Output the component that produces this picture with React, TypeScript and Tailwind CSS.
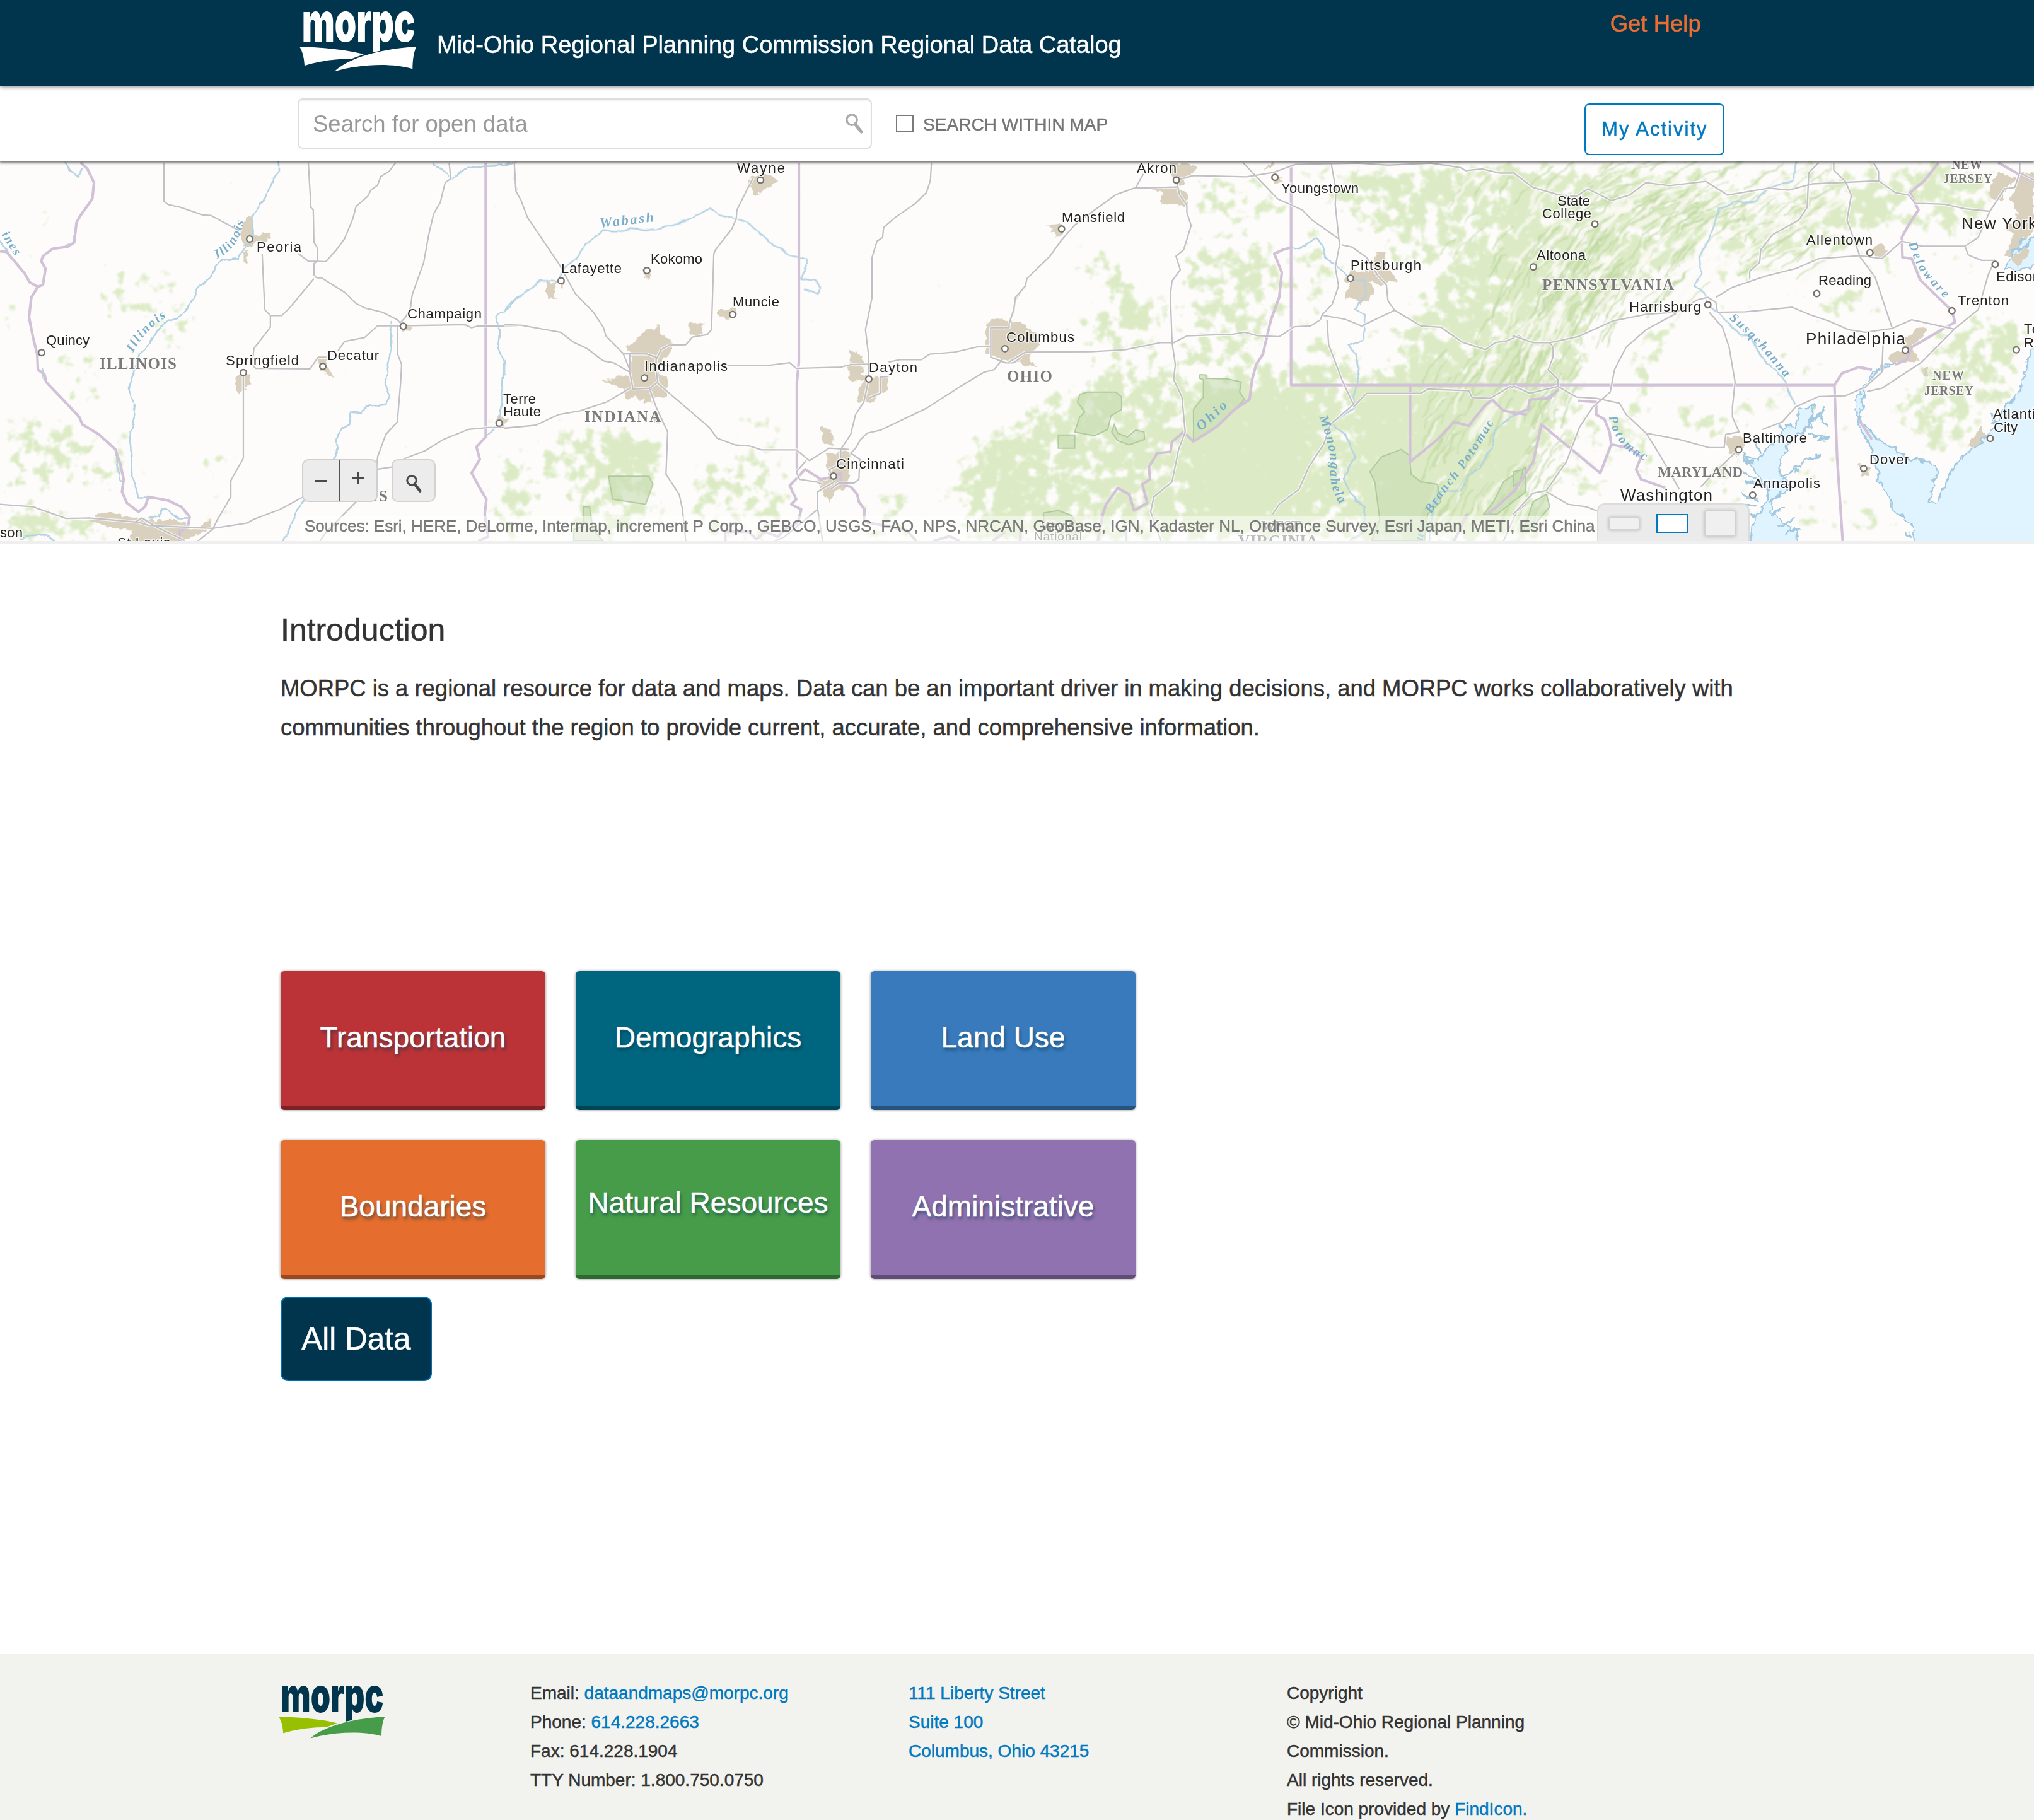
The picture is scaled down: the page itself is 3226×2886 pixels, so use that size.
import React from "react";

/* ------------------------------------------------------------------ */
/* Basemap data. Line work is stored in four survey sheets, each with   */
/* its own scale; labels are stored in page units.                      */
/* ------------------------------------------------------------------ */

type Sheet = {
  transform: string;
  kx: number;
  x0: number;
  roads: string[];
  rivers: string[];
  borders: string[];
  urban: string[];
  parks: string[];
  forest: [string, number][];
  cities: [number, number][];
};

const KY = 0.3954;

const sheets: Sheet[] = [
  {
    transform: "translate(0 250) scale(0.523 0.3954)",
    kx: 0.523,
    x0: 0,
    roads: [
      "M497 20V175L510 188L545 198L615 230L640 232L725 292",
      "M935 20L943 200L950 210L952 340L962 360V415L952 425V470L960 482",
      "M1200 20L1180 55L1155 75L1145 110L1125 130L1115 155L1080 195L1070 245L1045 325L1020 370L988 417L935 415L905 385",
      "M1362 20L1367 85L1350 100L1335 180L1315 225L1300 310L1285 420L1250 550L1245 600L1230 640L1215 660",
      "M960 482H975L1045 540L1080 585L1105 602L1160 620L1205 650L1223 676",
      "M952 485L880 600L855 633H820L803 610L795 385",
      "M820 633V680L770 765L765 830L775 845L940 847L965 800H990",
      "M1025 775L1045 737L1105 722L1145 674H1223L1410 670L1430 682L1450 675H1568",
      "M738 862V1205L700 1295V1360L660 1450L645 1490L600 1538",
      "M1205 676V785L1218 830L1215 900L1205 1060L1170 1110L1145 1200L1142 1250L1190 1240L1230 1205L1290 1175L1345 1130L1420 1090L1480 1082H1568",
      "M970 1538L990 1500L1080 1380",
      "M0 1390L100 1400L200 1447L270 1445L420 1462L450 1475L530 1480L645 1487L750 1465L770 1450L850 1410L920 1360",
      "M410 1462L430 1445L480 1485L560 1535",
      "M1568 130L1560 90V20",
    ],
    rivers: [
      "M845 20V55L825 95L800 170L765 240L768 320L740 365L722 405L670 412L655 430L640 480L600 520L590 560L565 605L540 645L510 655L480 690L455 745L420 790L410 850L388 930L402 980L410 1030L395 1100L400 1200L402 1285L420 1362H450",
      "M200 20L210 50L235 78L250 45",
      "M1315 20L1372 85L1400 55L1420 38L1530 32L1568 18",
      "M1187 655L1185 770L1168 905L1182 955L1170 990L1110 1000L1095 1022L1065 1018L1060 1070L1040 1085L1018 1135L1025 1165L1010 1215",
      "M920 1375L880 1470L860 1538",
      "M1568 555L1545 600L1505 635L1515 700L1510 760L1528 820L1522 960L1515 1065L1475 1120",
      "M60 1530L90 1515L140 1512L165 1538",
      "M0 335L25 375",
      "M450 1445L480 1440L490 1410L510 1412L540 1445H570",
      "M225 310L222 345L200 358",
      "M352 1180L362 1290L372 1300",
      "M128 845L132 890",
    ],
    borders: [
      "M1473 20V1120L1445 1160L1455 1210L1430 1265L1455 1325L1475 1370L1470 1430L1480 1520L1450 1538",
      "M245 20L265 45L285 100L280 165L245 230L232 260L225 340L205 357L160 365L130 395L125 415L138 445L130 510L115 518L95 560L88 640L100 720L113 790L115 850L135 870L140 900L205 990L240 1040L250 1070L300 1110L350 1170L365 1230L375 1290L370 1340L385 1385L420 1420L440 1400L450 1360L510 1375L550 1400L575 1440L570 1480L545 1500V1538",
      "M0 375L20 378L50 425L75 465L90 500L115 518",
    ],
    urban: [
      "M740 240L765 235L770 310L820 305V325L780 340L760 365L735 350Z",
      "M735 375H750V415L735 420Z",
      "M710 880L755 865L760 910L725 950L715 930Z",
      "M960 815L985 805L1000 850L1010 880L975 855Z",
      "M1212 662L1250 672L1245 700L1222 692Z",
      "M1500 1060L1515 1035L1540 1050L1530 1082H1500Z",
      "M270 1455L310 1420L390 1440L420 1450L540 1455L580 1490L640 1450V1480L600 1510L560 1538H380L400 1500L330 1480Z",
    ],
    parks: [],
    forest: [
      ["M300 440H560V650H300Z", 0.36],
      ["M460 640H600V760H460Z", 0.38],
      ["M60 360L130 380V480L90 470Z", 0.44],
      ["M90 190H210V290H90Z", 0.37],
      ["M0 540H70V800H0Z", 0.36],
      ["M140 740L330 780L300 1060L200 960Z", 0.38],
      ["M0 1000L240 1060L360 1250L330 1380L120 1200L0 1180Z", 0.42],
      ["M320 1080H390L400 1350L375 1290L350 1170Z", 0.5],
      ["M410 1270L470 1290L480 1350L420 1360Z", 0.52],
      ["M0 1370L200 1420L330 1470V1538H60L0 1500Z", 0.6],
      ["M600 1180H720V1290H600Z", 0.36],
      ["M620 480H680V540H620Z", 0.38],
      ["M1130 1120H1220V1230H1130Z", 0.34],
      ["M1470 980H1510V1130H1470Z", 0.38],
      ["M1500 1200H1568V1538H1480Z", 0.38],
      ["M590 1360H700V1440H590Z", 0.38],
      ["M0 1180H200V1350H0Z", 0.35],
    ],
    cities: [[757, 326], [126, 782], [738, 862], [979, 837], [1223, 676], [1514, 1065]],
  },
  {
    transform: "translate(800 250) scale(0.523 0.3954)",
    kx: 0.523,
    x0: 800,
    roads: [
      "M30 20L35 135L50 170L70 240L165 425L215 545L270 620L300 680L308 715L360 785L380 850",
      "M0 670L50 672L170 700L210 740L250 765L300 815L330 822L380 860",
      "M0 1085L95 1073L165 1030L230 1015L310 980L380 925",
      "M755 80L735 130L705 210L703 245L690 285L640 370L635 385L632 520L628 690L615 710L570 720L550 750L500 752L475 770L460 810",
      "M360 787H430L460 800V850L465 900L440 925L390 928L380 860V787",
      "M465 833H800L865 822L885 845L1020 840L1050 830L1105 828",
      "M1165 820L1200 810H1265L1290 788L1365 780L1440 757H1475",
      "M465 905L620 1080L645 1125L700 1152L745 1157L780 1172H885L925 1215L985 1165L1045 1170",
      "M440 925L460 1000L495 1100L490 1270L530 1350L540 1410L550 1538",
      "M1295 20L1292 90L1280 140L1245 185L1185 240L1150 280L1147 320L1130 335L1115 400V560L1095 690L1105 800V888L1090 980L1065 1030L1050 1110L1020 1170V1230L985 1250L1000 1300L950 1340V1410L965 1538",
      "M1105 965L1140 945V880L1165 878",
      "M1510 810L1485 850L1455 860L1380 920L1280 1005L1140 1093L1100 1105L1080 1130L1065 1165L1050 1185L1078 1210L1075 1290L1060 1305H1015L990 1328",
      "M915 1215L885 1260L895 1290L945 1300L965 1310",
      "M1568 535L1550 570L1545 620L1532 650L1530 682H1475V800L1520 823H1545L1568 800",
      "M950 1410L850 1520L820 1538",
    ],
    rivers: [
      "M0 610L35 560L75 530L110 492L160 497L185 440L220 400L250 345L300 293L360 295L385 285L430 292L490 278L560 245L625 203L650 228L700 243L740 260L815 352L835 358L855 385L915 405L918 425L900 485L940 492L962 520L950 548L910 528",
      "M0 815V870",
      "M0 30L15 20",
    ],
    borders: [
      "M893 20V820L887 900V1260",
      "M887 1285L912 1250L960 1290L998 1280L1020 1265V1310L1050 1320L1070 1350L1075 1380L1092 1410L1090 1460L1150 1475L1220 1495L1250 1538",
      "M887 1285L865 1315L885 1370L870 1390L900 1410L890 1465L850 1490L830 1520L790 1500L765 1530L740 1500H670V1538",
      "M1300 1538L1350 1518L1380 1538M1480 1538L1520 1500",
    ],
    urban: [
      "M735 90L790 60L830 95L795 120L760 155L750 120Z",
      "M128 503H155V563H128ZM165 500L190 505L175 530Z",
      "M418 445L445 440L440 485L425 480Z",
      "M650 612L705 605V640H650Z",
      "M563 665H603V712H563Z",
      "M385 790L370 760L430 700L470 670L480 710L510 745L500 790L465 820V870H495V960H440L450 990L425 985V965H365V930L300 890L380 870Z",
      "M450 1020H470V1065H450Z",
      "M1045 770L1085 795V870L1165 885L1160 930L1110 985L1070 975L1085 900L1045 895Z",
      "M960 1085H985L1000 1155H965Z",
      "M975 1180L1050 1185L1040 1310L1000 1350L985 1385L965 1330L950 1300L985 1280Z",
      "M1455 690L1475 640L1568 665V790L1530 820L1460 780Z",
    ],
    parks: [
      "M316 1278H438L450 1310L428 1390L328 1370Z",
      "M240 1400H258L268 1490L300 1538H210V1490L240 1480Z",
    ],
    forest: [
      ["M20 790L150 750V780L60 820L0 830Z", 0.42],
      ["M120 1080L260 1060L470 1120L485 1400L430 1538H180L200 1400L110 1250Z", 0.46],
      ["M290 1120H480V1260H300Z", 0.5],
      ["M720 1000L870 1020L860 1150H720Z", 0.4],
      ["M560 1200L880 1160L860 1300L900 1420L820 1538H600L540 1350Z", 0.41],
      ["M1100 1280L1260 1350L1240 1538H1090Z", 0.39],
      ["M1120 1050H1220V1110H1120Z", 0.35],
      ["M1440 1100L1568 1070V1538H1380L1400 1400L1370 1280Z", 0.58],
      ["M1260 480H1320V560H1260Z", 0.37],
      ["M1300 1280H1390V1400H1300Z", 0.38],
      ["M0 1180H110V1538H0Z", 0.37],
      ["M940 620H990V660H940Z", 0.38],
      ["M130 30H180V60H130ZM250 40H290V70H250Z", 0.38],
    ],
    cities: [[777, 90], [172, 494], [432, 453], [692, 629], [425, 883], [1105, 888], [998, 1277], [1518, 766]],
  },
  {
    transform: "translate(1600 250) scale(0.523 0.3954)",
    kx: 0.523,
    x0: 1600,
    roads: [
      "M408 65L385 120L325 148L255 215L200 270L160 330L125 395L55 485L50 515L20 560L15 610L0 670",
      "M385 122L510 118M510 90L560 72L720 77L800 60L870 27L1060 22L1150 30L1280 22L1370 40L1385 52L1435 45L1490 62H1535L1568 100",
      "M510 100L518 150L540 190V220L553 272L530 370L507 395L520 450L495 495L490 550L495 740L505 830L500 890L525 960L535 1100L515 1170L495 1300L440 1360L430 1420L462 1538",
      "M0 820L50 780L250 778L355 770L460 742H500L540 715L680 708L715 700L755 714L820 718L865 678L915 675L945 650L950 630L980 590L1000 515L990 440L1003 350L990 190L992 130L978 25",
      "M710 20L815 165L890 210L920 250L1000 325",
      "M1010 350L1040 358L1085 400L1120 475L1145 510L1150 575L1170 612L1250 675L1310 680L1375 740L1445 770L1475 742L1510 735L1545 715L1568 730",
      "M950 632L1020 648L1070 675L1170 612",
      "M965 650L970 750L1010 890L1045 990L975 1070L955 1150L910 1240L880 1330L820 1390L800 1430",
      "M1045 1000L1085 945L1250 945L1270 928L1395 935L1405 962L1460 965L1520 918L1568 935",
      "M1500 1538L1540 1420L1568 1390",
    ],
    rivers: [
      "M858 358L880 362L935 320L950 350L960 400L1000 440L1036 484L1080 495L1085 550L1050 605L1080 630L1075 730L1030 750L1055 800L1062 880L1045 960L1050 1000L980 1065L1020 1110L1050 1200L1015 1290L1055 1380L1080 1400L1078 1500L1035 1538",
      "M1568 1020L1530 1035L1475 1090L1470 1150L1430 1240L1400 1270L1370 1335L1310 1340L1290 1390L1275 1538",
      "M355 1480V1538",
    ],
    borders: [
      "M856 30V912H1568",
      "M1217 912V1220L1300 1130L1350 1060L1395 1075L1440 1000L1465 970L1500 1015L1568 1030",
      "M856 360L830 370L805 385L828 460L820 560L795 650L770 790L750 830L738 890L730 970L685 1010L630 1080L560 1138L530 1100L495 1140L490 1180L450 1185L425 1240L428 1290L405 1310L420 1385L380 1415L365 1350L330 1325L295 1390L285 1430L270 1538",
      "M1568 1270L1530 1340L1480 1400L1450 1430M1390 1430L1350 1538M35 1490V1538",
    ],
    urban: [
      "M0 660H30L70 690L100 745L60 790L80 840L40 830L0 810Z",
      "M485 25H550L570 45L530 100L510 110L540 150V190H465V145L430 130L500 115Z",
      "M115 270L155 265L165 310L145 320Z",
      "M785 25H800L795 40H770ZM815 60L832 95L805 105L800 70Z",
      "M1035 450L1090 460L1110 540L1070 590L1050 560L1015 565L1035 500L1015 490ZM1115 380L1145 375L1140 430L1180 490L1140 510L1085 490Z",
    ],
    parks: [
      "M238 940H325L342 960V1010L310 1035L300 1090L260 1115L200 1100L215 1040L230 1020L208 980L215 950Z",
      "M150 1112H200V1165H150Z",
      "M320 1070L330 1105L360 1120L385 1092L410 1100L412 1130L365 1152L330 1135L312 1100Z",
      "M580 870L598 872V885L665 888L705 900L700 940L715 970L685 1010L630 1080L560 1138V1010L590 960V890L578 885Z",
      "M1190 1170L1215 1195L1220 1270L1250 1300L1300 1310L1310 1380L1270 1430L1260 1538H1100L1125 1450L1110 1300L1095 1260L1130 1200Z",
      "M1568 1240L1500 1300L1470 1380L1440 1430H1480L1568 1340Z",
      "M105 1425L150 1415L190 1435L210 1480L190 1538H110Z",
    ],
    forest: [
      ["M100 940L300 900L560 930L760 830L1100 880L1330 890L1568 880V1538H0V1130Z", 0.57],
      ["M560 950H900V1480H560Z", 0.6],
      ["M1080 900H1568V1538H1080Z", 0.5],
      ["M520 300L840 360L830 640L770 850L560 860L520 700Z", 0.46],
      ["M170 600L480 560V760L230 780Z", 0.46],
      ["M170 350L330 370L370 500L440 560L430 680L340 640L270 500L180 400Z", 0.48],
      ["M270 800H560V930H250Z", 0.46],
      ["M700 370H800V500H700Z", 0.3],
      ["M540 60L840 90V280H560Z", 0.4],
      ["M870 30H1568V340L1380 380L1080 330L1000 200L870 110Z", 0.49],
      ["M1080 40H1568V180H1300L1080 150Z", 0.25],
      ["M870 240L1000 330V600L870 640Z", 0.42],
      ["M870 680L980 700L1120 880H870Z", 0.43],
      ["M1320 400L1568 330V900H1120L1180 720L1260 560Z", 0.58],
      ["M1060 640H1150V720H1060Z", 0.43],
      ["M1100 540L1250 560V640L1150 600Z", 0.38],
      ["M1150 340L1320 380L1260 480L1160 450Z", 0.42],
    ],
    cities: [[508, 90], [807, 79], [160, 286], [1036, 484]],
  },
  {
    transform: "translate(2400 250) scale(0.5268 0.3954)",
    kx: 0.5268,
    x0: 2400,
    roads: [
      "M0 60L60 120L140 150L190 155L225 125L295 172L350 150L400 100L470 112L580 95L645 150L770 122L830 130L900 105L1100 93L1150 140L1190 150L1210 183L1300 187L1360 205L1435 215L1480 125L1510 120L1525 60V20",
      "M920 20L890 60L885 200L860 250L780 310L745 370L742 420L712 455V485",
      "M965 20V50L1000 95L1018 150L1005 250L1045 400L1090 480L1140 680",
      "M1085 20L1100 55V93",
      "M610 560L660 520L760 475L850 445L920 405L1045 393L1110 405L1170 335L1230 355H1360L1400 320L1435 215",
      "M1360 355L1370 390L1410 412H1450L1430 470L1400 610L1330 685L1230 820L1110 925L1065 938",
      "M0 715L60 742H110L195 718L300 655L400 628L490 620L555 570L586 560L610 580L615 620L700 618L840 600L890 628L950 655L1010 690L1060 700L1140 685L1200 650L1330 688",
      "M110 742L120 760V800L105 850L135 890V918L190 960L250 965L320 985L340 1030L400 1105L500 1130L590 1163H635L640 1110L680 1100L660 1040V1000L668 900L650 760L630 680L590 620",
      "M490 625L400 690L340 760L305 850L292 940L240 1000L200 1080L160 1220L100 1335L60 1345L0 1430",
      "M100 1340L165 1390L220 1400L260 1420",
      "M400 1105L445 1200L500 1330M675 1175L600 1270L565 1320",
      "M750 1090L810 1060L850 1000L920 958L1000 955L1060 920L1110 860L1115 700",
      "M0 915L50 945L135 918",
      "M1525 60L1568 90",
    ],
    rivers: [
      "M850 20L845 90L770 122L730 175L700 180L675 170L620 205L600 290L560 400L567 465L545 515L580 545L586 590L640 650L680 710L715 715L740 790L810 880L850 990",
      "M100 965L135 930M0 1030L45 1010",
    ],
    borders: [
      "M0 912H967L975 1200L992 1538",
      "M967 912L990 865L1040 840L1080 850",
      "M1280 20L1240 90L1195 140L1220 210L1190 270L1170 320L1172 400L1200 405L1225 490L1321 614L1330 660L1290 690L1200 760L1185 810L1150 830",
      "M1460 20L1520 65L1568 95",
      "M0 1030L45 1010L50 970L110 965L135 930",
      "M195 975L250 980V1030L275 1050L290 1100L295 1150L350 1165L385 1200L370 1250L385 1290L460 1325",
      "M295 1150L262 1265L85 1070L60 1220L0 1345",
      "M1040 1050L1080 1130",
    ],
    urban: [
      "M1060 375L1110 345L1125 380L1080 395Z",
      "M1180 720L1230 670L1250 690L1200 760L1220 820L1185 815L1140 825L1130 800L1165 775ZM1225 840L1250 845L1245 880L1230 870Z",
      "M645 1120H690L695 1165L670 1200L650 1180Z",
      "M1370 1160L1410 1080L1430 1115L1400 1155Z",
      "M1040 1230L1075 1245L1070 1280L1045 1275Z",
      "M1465 60L1510 80L1470 165L1435 160V120ZM1530 60H1568V290L1530 330L1500 400L1480 390L1510 310L1480 290L1520 230L1495 170Z",
    ],
    parks: ["M0 1260L30 1250L20 1300L0 1320Z", "M60 1380L100 1350L110 1400L60 1480L30 1500Z"],
    forest: [
      ["M0 20H600L560 120L640 160L560 420L300 600L200 700H0Z", 0.58],
      ["M600 20H1300L1200 140L1170 280L1050 250L1000 120L620 90Z", 0.48],
      ["M1200 30H1440L1470 180L1400 210L1220 180Z", 0.58],
      ["M620 160L1000 130L1160 180L1040 380L820 420L600 540L620 350Z", 0.5],
      ["M1180 200H1440L1400 320L1360 340L1200 330Z", 0.48],
      ["M0 700H240L220 850L120 1100L0 1340Z", 0.6],
      ["M0 1340L110 1380V1538H0Z", 0.56],
      ["M390 680L540 640L430 800L410 1060L350 1080V860Z", 0.54],
      ["M820 540L1050 500L1140 620L960 660Z", 0.46],
      ["M620 570L830 570L830 600L640 610Z", 0.44],
      ["M430 950L660 1000V1160L480 1120Z", 0.42],
      ["M660 950L840 930L830 1060L680 1090Z", 0.42],
      ["M700 800L900 760L960 900L820 890Z", 0.4],
      ["M560 1180L700 1200V1400H600Z", 0.44],
      ["M100 1060L220 1100L300 1340L250 1400L120 1300Z", 0.44],
      ["M130 930L330 1030L460 1200L420 1280L300 1200Z", 0.43],
      ["M1250 700L1440 620L1530 760L1500 950L1400 1080L1230 1130L1130 1060L1160 920L1240 880Z", 0.5],
      ["M1430 620L1560 620V720L1500 800Z", 0.5],
      ["M1210 1100L1400 1090L1330 1200L1260 1220Z", 0.44],
      ["M1040 400L1180 380L1230 520L1100 500Z", 0.4],
      ["M1260 380L1380 400L1360 520L1300 480Z", 0.42],
      ["M990 940L1040 1080L1020 1200H990Z", 0.39],
      ["M1000 1320L1100 1380L1170 1538H1000Z", 0.38],
      ["M900 960L960 1000V1250L900 1100Z", 0.4],
      ["M860 1200H950V1538H860Z", 0.37],
    ],
    cities: [
      [246, 266], [61, 438], [586, 590], [1074, 381], [914, 545], [1451, 428], [1321, 614],
      [1181, 772], [1515, 771], [1436, 1126], [679, 1171], [721, 1353], [1055, 1247],
    ],
  },
];

const water: string[] = [
  "M1580 740L1558 770L1545 850L1520 950L1480 1000L1460 1050L1430 1110L1400 1150L1350 1200L1310 1280L1290 1340L1280 1380L1250 1382L1270 1300L1275 1240L1240 1215H1200L1150 1170L1100 1130L1060 1080L1040 1050L1055 1000L1050 960L1070 910L1100 850L1150 830L1120 828L1080 870L1060 910L1030 970L1040 1070L1080 1170L1095 1230L1100 1300L1130 1360L1150 1420L1200 1470L1212 1560H1600V740Z",
  "M1590 310L1530 330L1510 380L1480 445L1530 450L1590 430Z",
  "M862 1010L885 1015L905 990L900 1050L880 1090L840 1130L815 1180L800 1260L830 1300L820 1350L780 1370L775 1420L850 1500L862 1560H712L720 1470L760 1380L770 1340L745 1290L725 1240L695 1200L740 1215L765 1160L800 1130L810 1080L850 1080Z",
];

const inlets: string[] = [
  "M890 1060L905 1040L895 1080M905 1050L945 1000M910 1040L930 1020V1050L948 1075M890 1110L950 1122L915 1135",
  "M805 1280L870 1230L880 1205L925 1195M840 1250L865 1260M700 1180L690 1215L725 1220M745 1190L730 1140M810 1090L795 1070",
  "M690 1260L730 1290M700 1300L740 1310M685 1350L740 1370M690 1390L735 1400M700 1420L730 1440M800 1300L830 1280M780 1440L810 1400M800 1480L850 1440M820 1510L860 1480M770 1380L800 1360L810 1340",
  "M1225 1210L1235 1225M1440 1020L1450 1060M1180 1500L1200 1520M1500 380L1550 350L1555 320",
];

type Label = [string, number, number, number, number?];

const cityLabels: Label[] = [
  ["Peoria", 407, 478, 399], ["Quincy", 73, 142, 547], ["Springfield", 358, 474, 579],
  ["Decatur", 519, 601, 571], ["Champaign", 646, 764, 505], ["son", 0, 36, 852],
  ["St Louis", 186, 270, 868], ["Terre", 798, 850, 640], ["Haute", 798, 858, 660],
  ["Wayne", 1169, 1245, 274], ["Lafayette", 890, 986, 433], ["Kokomo", 1032, 1114, 418],
  ["Muncie", 1162, 1236, 486], ["Indianapolis", 1022, 1154, 588], ["Dayton", 1378, 1455, 590],
  ["Cincinnati", 1326, 1434, 743], ["Akron", 1803, 1866, 274], ["Youngstown", 2032, 2155, 306],
  ["Mansfield", 1684, 1784, 352], ["Columbus", 1596, 1704, 542], ["Pittsburgh", 2142, 2254, 428],
  ["State", 2470, 2522, 326], ["College", 2446, 2524, 346], ["Altoona", 2437, 2515, 412],
  ["Harrisburg", 2584, 2698, 494], ["Allentown", 2865, 2970, 388], ["Reading", 2884, 2968, 452],
  ["New York", 3111, 3230, 363, 26], ["Edison", 3166, 3236, 446], ["Trenton", 3105, 3186, 484],
  ["Philadelphia", 2864, 3022, 546, 26], ["To", 3210, 3235, 529], ["Ri", 3210, 3231, 551],
  ["Atlantic", 3161, 3240, 664], ["City", 3162, 3200, 685], ["Baltimore", 2764, 2866, 702],
  ["Annapolis", 2781, 2887, 774], ["Dover", 2965, 3028, 736], ["Washington", 2570, 2716, 794, 26],
];

const stateLabels: Label[] = [
  ["ILLINOIS", 158, 280, 585], ["INDIANA", 927, 1048, 669], ["OHIO", 1597, 1669, 605],
  ["PENNSYLVANIA", 2446, 2655, 460], ["MARYLAND", 2629, 2764, 756, 23], ["NEW", 3095, 3144, 268, 20],
  ["JERSEY", 3082, 3160, 290, 20], ["NEW", 3065, 3115, 602, 20], ["JERSEY", 3052, 3130, 626, 20],
  ["VIRGINIA", 1964, 2090, 866], ["WEST", 2000, 2063, 841, 23], ["IS", 590, 615, 795],
];

const parkLabels: Label[] = [
  ["Wayne", 1652, 1704, 841, 20], ["National", 1640, 1716, 857, 19],
];

const riverLabels: [string, string, number, number][] = [
  ["Illinois", "M344 410Q378 396 388 346", 76, 20],
  ["Illinois", "M211 559Q228 524 268 500", 78, 20],
  ["ines", "M2 372L26 410", 40, 20],
  ["Wabash", "M952 361L1038 351", 86, 22],
  ["Ohio", "M1905 684L1950 642", 58, 22],
  ["Monongahela", "M2092 661Q2112 712 2110 744T2128 804", 144, 21],
  ["Branch Potomac", "M2270 815Q2288 784 2306 764T2371 668", 176, 20],
  ["u", "M2256 858L2262 830", 10, 20],
  ["Delaware", "M3027 386Q3040 424 3050 436T3087 476", 106, 20],
  ["Susqehanna", "M2742 505Q2768 528 2782 542T2832 600", 130, 20],
  ["Potomac", "M2552 661Q2556 684 2570 702T2612 732", 94, 20],
];

/* Small seeded generator so the ridge hatching is stable between renders. */
function createRandom(seed: number) {
  let s = seed;
  return () => {
    s = (s * 1664525 + 1013904223) % 4294967296;
    return s / 4294967296;
  };
}

type Ridge = { d: string; light: boolean; w: number };

function buildRidges(): Ridge[] {
  const rand = createRandom(11);
  const zones = [
    { x: 2280, y: 300, w: 170, h: 150, angle: -48, n: 14, light: 0.3 },
    { x: 2360, y: 420, w: 190, h: 140, angle: -60, n: 55, light: 0.35 },
    { x: 2420, y: 330, w: 250, h: 180, angle: -50, n: 100, light: 0.45 },
    { x: 2500, y: 262, w: 240, h: 110, angle: -28, n: 60, light: 0.45 },
    { x: 2690, y: 300, w: 180, h: 150, angle: -32, n: 70, light: 0.6 },
    { x: 2250, y: 610, w: 200, h: 240, angle: -60, n: 90, light: 0.25 },
    { x: 2330, y: 480, w: 130, h: 130, angle: -62, n: 30, light: 0.3 },
    { x: 2400, y: 520, w: 90, h: 160, angle: -66, n: 36, light: 0.35 },
  ];
  const ridges: Ridge[] = [];
  zones.forEach((z) => {
    for (let i = 0; i < z.n; i++) {
      const a = ((z.angle + (rand() - 0.5) * 14) * Math.PI) / 180;
      const len = 26 + rand() * 62;
      const x = z.x + rand() * z.w;
      const y = z.y + rand() * z.h;
      const dx = Math.cos(a) * len;
      const dy = Math.sin(a) * len;
      const light = rand() < z.light;
      const cx = x + dx / 2 - 5;
      const cy = y + dy / 2 - 6;
      ridges.push({
        d: `M${x.toFixed(1)} ${y.toFixed(1)}Q${cx.toFixed(1)} ${cy.toFixed(1)} ${(x + dx).toFixed(1)} ${(y + dy).toFixed(1)}`,
        light,
        w: light ? 3 + rand() * 5 : 1.5 + rand() * 1.5,
      });
    }
  });
  return ridges;
}

const ridges = buildRidges();

function MapLabel({ item, serif, fill }: { item: Label; serif?: boolean; fill: string }) {
  const [text, x0, x1, y, size] = item;
  return (
    <text
      x={x0}
      y={y}
      textLength={x1 - x0}
      fontSize={size ?? (serif ? 25 : 22)}
      fontWeight={serif ? 700 : 400}
      fill={fill}
      stroke="#fdfcfb"
      strokeOpacity={0.75}
      strokeWidth={3.5}
      paintOrder="stroke"
      className={serif ? "font-['Liberation_Serif',serif]" : "font-['Liberation_Sans',Arial,sans-serif]"}
    >
      {text}
    </text>
  );
}

function Basemap() {
  return (
    <svg className="block h-[602px] w-[3226px]" viewBox="0 256 3226 602" preserveAspectRatio="none">
      <defs>
        <filter id="foliage" filterUnits="userSpaceOnUse" x="-20" y="230" width="3270" height="650" colorInterpolationFilters="sRGB">
          <feGaussianBlur in="SourceGraphic" stdDeviation="16" result="density" />
          <feTurbulence type="fractalNoise" baseFrequency="0.05" numOctaves="5" seed="7" result="noise" />
          <feColorMatrix in="noise" type="matrix" values="0 0 0 0 0  0 0 0 0 0  0 0 0 0 0  0 0 0 1 0" result="grain" />
          <feComposite in="density" in2="grain" operator="arithmetic" k1="0" k2="0.5" k3="0.5" k4="0" result="mix" />
          <feComponentTransfer in="mix" result="mask">
            <feFuncA type="linear" slope="12" intercept="-5.3" />
          </feComponentTransfer>
          <feFlood floodColor="#dcebc5" />
          <feComposite in2="mask" operator="in" result="leaf" />
          <feGaussianBlur in="leaf" stdDeviation="0.9" />
        </filter>
        <filter id="ragged" filterUnits="userSpaceOnUse" x="-20" y="230" width="3270" height="650">
          <feTurbulence type="fractalNoise" baseFrequency="0.09" numOctaves="2" seed="3" result="n" />
          <feDisplacementMap in="SourceGraphic" in2="n" scale="13" xChannelSelector="R" yChannelSelector="G" />
        </filter>
        <filter id="wavy" filterUnits="userSpaceOnUse" x="-20" y="230" width="3270" height="650">
          <feTurbulence type="fractalNoise" baseFrequency="0.06" numOctaves="2" seed="5" result="n" />
          <feDisplacementMap in="SourceGraphic" in2="n" scale="6" xChannelSelector="R" yChannelSelector="G" />
        </filter>
        <filter id="ridge" filterUnits="userSpaceOnUse" x="-20" y="230" width="3270" height="650">
          <feTurbulence type="fractalNoise" baseFrequency="0.05" numOctaves="2" seed="9" result="n" />
          <feDisplacementMap in="SourceGraphic" in2="n" scale="10" xChannelSelector="R" yChannelSelector="G" result="r" />
          <feGaussianBlur in="r" stdDeviation="1.1" />
        </filter>
      </defs>

      <rect x="0" y="256" width="3226" height="602" fill="#fdfcfb" />

      <g filter="url(#foliage)">
        {sheets.map((s) => (
          <g key={s.x0} transform={s.transform}>
            {s.forest.map(([d, o]) => (
              <path key={d} d={d} fill="#000" fillOpacity={o} />
            ))}
          </g>
        ))}
      </g>

      <g filter="url(#ridge)" fill="none" strokeLinecap="round">
        {ridges.map((r) => (
          <path
            key={r.d}
            d={r.d}
            stroke={r.light ? "#fbfaf4" : "#bfd7a0"}
            strokeOpacity={r.light ? 0.7 : 0.75}
            strokeWidth={r.w}
          />
        ))}
      </g>

      {sheets.map((s) => (
        <g key={s.x0} transform={s.transform}>
          {s.parks.map((d) => (
            <path key={d} d={d} fill="#c6dcb0" fillOpacity={0.6} stroke="#b0caa0" strokeWidth={2} vectorEffect="non-scaling-stroke" />
          ))}
        </g>
      ))}

      <g filter="url(#ragged)">
        {sheets.map((s) => (
          <g key={s.x0} transform={s.transform}>
            {s.urban.map((d) => (
              <path key={d} d={d} fill="#d9d1be" />
            ))}
          </g>
        ))}
        <g transform={sheets[3].transform} strokeLinejoin="round">
          {water.map((d) => (
            <path key={d} d={d} fill="#dff4fe" stroke="#a3c9e2" strokeWidth={2.5} vectorEffect="non-scaling-stroke" />
          ))}
          {inlets.map((d) => (
            <path key={d} d={d} fill="none" stroke="#a3c9e2" strokeWidth={3.5} vectorEffect="non-scaling-stroke" />
          ))}
          <path d="M1500 400L1540 360L1560 370L1520 440Z" fill="#d9d1be" />
        </g>
      </g>

      <g filter="url(#wavy)" fill="none" strokeLinejoin="round" strokeLinecap="round">
        {sheets.map((s) => (
          <g key={s.x0} transform={s.transform}>
            {s.rivers.map((d) => (
              <path key={d} d={d} stroke="#b4d3e4" strokeWidth={2.6} vectorEffect="non-scaling-stroke" />
            ))}
          </g>
        ))}
      </g>

      <g fill="none" strokeLinejoin="round">
        {sheets.map((s) => (
          <g key={s.x0} transform={s.transform}>
            {s.borders.map((d) => (
              <path key={d} d={d} stroke="#d2c2d7" strokeWidth={4.2} vectorEffect="non-scaling-stroke" />
            ))}
            {s.roads.map((d) => (
              <path key={`halo${d}`} d={d} stroke="#ffffff" strokeOpacity={0.7} strokeWidth={5} vectorEffect="non-scaling-stroke" />
            ))}
            {s.roads.map((d) => (
              <path key={d} d={d} stroke="#c2c0c4" strokeWidth={2.3} vectorEffect="non-scaling-stroke" />
            ))}
          </g>
        ))}
      </g>

      {riverLabels.map(([text, d, len, size], i) => (
        <g key={d}>
          <path id={`river-${i}`} d={d} fill="none" />
          <text fontSize={size} fontWeight={700} fill="#79aecb" className="font-['Liberation_Serif',serif] italic">
            <textPath href={`#river-${i}`} textLength={len}>
              {text}
            </textPath>
          </text>
        </g>
      ))}

      {stateLabels.map((l) => (
        <MapLabel key={l[0] + l[1]} item={l} serif fill="#7a7a7a" />
      ))}
      {parkLabels.map((l) => (
        <MapLabel key={l[0] + l[1]} item={l} fill="#6a7062" />
      ))}

      {sheets.map((s) =>
        s.cities.map(([x, y]) => (
          <circle
            key={`${s.x0}-${x}`}
            cx={s.x0 + x * s.kx}
            cy={250 + y * KY}
            r={4.8}
            fill="#fff"
            stroke="#77736c"
            strokeWidth={2.4}
          />
        )),
      )}

      {cityLabels.map((l) => (
        <MapLabel key={l[0] + l[1]} item={l} fill="#222222" />
      ))}
    </svg>
  );
}

function Logo({ className, ink, left, right, ground }: { className: string; ink: string; left: string; right: string; ground: string }) {
  return (
    <svg className={className} viewBox="100 45 565 300" preserveAspectRatio="none">
      <text
        x="114"
        y="199"
        fontSize="258"
        fontWeight="900"
        textLength="540"
        lengthAdjust="spacingAndGlyphs"
        fill={ink}
        className="font-['Inter','Liberation_Sans',sans-serif]"
      >
        morpc
      </text>
      <path d="M440 345V252C480 244 560 222 680 214V345Z" fill={ground} />
      <path d="M103 222C200 225 320 235 410 258L352 280C270 280 190 292 127 313C125 275 118 245 103 222Z" fill={left} />
      <path d="M660 222C645 255 642 295 642 328C540 298 390 305 270 340C320 290 450 235 660 222Z" fill={right} />
    </svg>
  );
}

function Magnifier({ className, strokeWidth }: { className: string; strokeWidth: number }) {
  return (
    <svg className={className} viewBox="0 0 30 34" fill="none" stroke="currentColor" strokeLinecap="round">
      <circle cx="11" cy="11" r="8.2" strokeWidth={strokeWidth} />
      <path d="M16.5 18L26 30" strokeWidth={strokeWidth + 1.8} />
    </svg>
  );
}

const sources =
  "Sources: Esri, HERE, DeLorme, Intermap, increment P Corp., GEBCO, USGS, FAO, NPS, NRCAN, GeoBase, IGN, Kadaster NL, Ordnance Survey, Esri Japan, METI, Esri China";

const tiles = [
  { label: "Transportation", color: "bg-[#bb3336] border-[#7d2224]", text: "pt-[79px]" },
  { label: "Demographics", color: "bg-[#00667f] border-[#004555]", text: "pt-[79px]" },
  { label: "Land Use", color: "bg-[#397abc] border-[#26527e]", text: "pt-[79px]" },
  { label: "Boundaries", color: "bg-[#e56d2d] border-[#9a491e]", text: "pt-[79px]" },
  { label: "Natural Resources", color: "bg-[#479c4a] border-[#2f6831]", text: "pt-[73px]" },
  { label: "Administrative", color: "bg-[#9172b0] border-[#614c76]", text: "pt-[79px]" },
];

export default function App() {
  return (
    <div className="flex h-[2886px] w-[3226px] flex-col overflow-hidden bg-white font-['Liberation_Sans',Arial,sans-serif] text-[#333] [-webkit-text-stroke:0.5px_currentColor]">
      <header className="relative z-20 flex h-[136px] shrink-0 items-start bg-[#00354d] pl-[474px] shadow-[0_1px_7px_rgba(0,0,0,0.6)]">
        <Logo className="mt-[15px] h-[100px] w-[188px] [-webkit-text-stroke:0]" ink="#fff" left="#fff" right="#fff" ground="#00354d" />
        <h1 className="mt-[47px] ml-[31px] text-[38px] leading-[48px] whitespace-nowrap text-white">
          Mid-Ohio Regional Planning Commission Regional Data Catalog
        </h1>
        <a className="mt-[14px] ml-[775px] text-[36.5px] leading-[48px] whitespace-nowrap text-[#ea6d33]">Get Help</a>
      </header>

      <div className="relative z-10 flex h-[120px] shrink-0 items-start bg-white pt-[20px] pl-[472px] shadow-[0_1px_4px_1px_rgba(0,0,0,0.6)]">
        <div className="flex h-[80px] w-[911px] items-center justify-between rounded-[8px] border-2 border-[#dedede] pr-[11px] pl-[22px] shadow-[inset_0_2px_2px_rgba(0,0,0,0.05)]">
          <span className="pt-[3px] text-[36.5px] text-[#999] [-webkit-text-stroke:0]">Search for open data</span>
          <Magnifier className="h-[34px] w-[30px] text-[#aaa]" strokeWidth={3.4} />
        </div>
        <div className="ml-[38px] flex h-[80px] items-center">
          <span className="h-[28px] w-[28px] border-2 border-[#7a7a7a]" />
          <span className="ml-[15px] pt-[3px] text-[28px] tracking-[0.05px] text-[#757575]">SEARCH WITHIN MAP</span>
        </div>
        <a className="mt-[8px] ml-[756px] flex h-[82px] w-[222px] items-center justify-center rounded-[8px] border-2 border-[#0079c1] text-[31px] tracking-[2px] text-[#0079c1]">
          My Activity
        </a>
      </div>

      <div className="relative h-[606px] shrink-0 overflow-hidden border-b-4 border-[#efefef] [-webkit-text-stroke:0]">
        <Basemap />
        <div className="absolute top-[562px] left-[476px] h-[40px] w-[2294px] bg-white/50 pl-[7px] text-[26px] leading-[30px] whitespace-nowrap text-[#666]/85">
          <span className="relative top-[1px] [-webkit-text-stroke:0.4px_currentColor]">{sources}</span>
        </div>
        <div className="absolute top-[472px] left-[479px] flex gap-[22px] text-[#4a4a4a]">
          <div className="flex h-[68px] w-[120px] overflow-hidden rounded-[10px] border-2 border-[#cfcfcf] bg-[#ececec]">
            <span className="flex h-full w-[58px] items-center justify-center border-r-2 border-[#555]">
              <span className="h-[3px] w-[19px] bg-[#4a4a4a]" />
            </span>
            <span className="relative flex h-full flex-1 items-center justify-center">
              <span className="absolute top-[27px] h-[3px] w-[18px] bg-[#4a4a4a]" />
              <span className="absolute top-[19px] h-[18px] w-[3px] bg-[#4a4a4a]" />
            </span>
          </div>
          <div className="flex h-[68px] w-[70px] items-center justify-center rounded-[10px] border-2 border-[#d2d2d2] bg-[#ececec] pt-[9px]">
            <Magnifier className="h-[30px] w-[27px]" strokeWidth={3.4} />
          </div>
        </div>
        <div className="absolute top-[542px] left-[2533px] flex h-[60px] w-[242px] items-center gap-[27px] rounded-t-[12px] border-2 border-b-0 border-[#dcdcdc] bg-[#ebebeb] pt-[2px] pl-[17px]">
          <span className="h-[19px] w-[48px] rounded-[3px] border border-[#d2d2d2] bg-[#f0f0f0] shadow-[0_0_4px_2px_rgba(0,0,0,0.15)]" />
          <span className="h-[30px] w-[50px] border-2 border-[#0079c1] bg-white" />
          <span className="h-[40px] w-[48px] rounded-[3px] border border-[#d2d2d2] bg-[#f0f0f0] shadow-[0_0_4px_2px_rgba(0,0,0,0.15)]" />
        </div>
      </div>

      <main className="flex h-[1760px] shrink-0 flex-col pl-[445px]">
        <h2 className="mt-[107px] text-[50px] leading-[60px]">Introduction</h2>
        <p className="mt-[32px] w-[2330px] text-[36.43px] leading-[62px]">
          MORPC is a regional resource for data and maps. Data can be an important driver in making decisions, and MORPC works collaboratively with
          <br />
          communities throughout the region to provide current, accurate, and comprehensive information.
        </p>
        <div className="mt-[355px] grid w-[1356px] grid-cols-3 gap-x-[48px] gap-y-[48px]">
          {tiles.map((t) => (
            <a
              key={t.label}
              className={`flex h-[220px] justify-center rounded-[6px] border-b-[6px] text-[46px] leading-[52px] whitespace-nowrap text-white shadow-[0_0_4px_rgba(0,0,0,0.45)] [text-shadow:2px_4px_5px_rgba(0,53,77,0.6)] ${t.color} ${t.text}`}
            >
              {t.label}
            </a>
          ))}
        </div>
        <a className="mt-[28px] flex h-[134px] w-[240px] items-center justify-center rounded-[12px] border-2 border-[#0070b5] bg-[#00354d] text-[49.5px] text-white">
          All Data
        </a>
      </main>

      <footer className="flex h-[264px] shrink-0 bg-[#f2f2ee] pl-[441px] text-[28px] leading-[46px]">
        <Logo className="mt-[48px] h-[88px] w-[171px] [-webkit-text-stroke:0]" ink="#00354d" left="#99c000" right="#479c4a" ground="#f2f2ee" />
        <div className="mt-[40px] ml-[229px] w-[600px] whitespace-nowrap">
          <div>Email: <a className="text-[#0079c1]">dataandmaps@morpc.org</a></div>
          <div>Phone: <a className="text-[#0079c1]">614.228.2663</a></div>
          <div>Fax: 614.228.1904</div>
          <div>TTY Number: 1.800.750.0750</div>
        </div>
        <div className="mt-[40px] w-[600px] whitespace-nowrap text-[#0079c1]">
          <div>111 Liberty Street</div>
          <div>Suite 100</div>
          <div>Columbus, Ohio 43215</div>
        </div>
        <div className="mt-[40px] whitespace-nowrap">
          <div>Copyright</div>
          <div>© Mid-Ohio Regional Planning</div>
          <div>Commission.</div>
          <div>All rights reserved.</div>
          <div>File Icon provided by <a className="text-[#0079c1]">FindIcon.</a></div>
        </div>
      </footer>
    </div>
  );
}
